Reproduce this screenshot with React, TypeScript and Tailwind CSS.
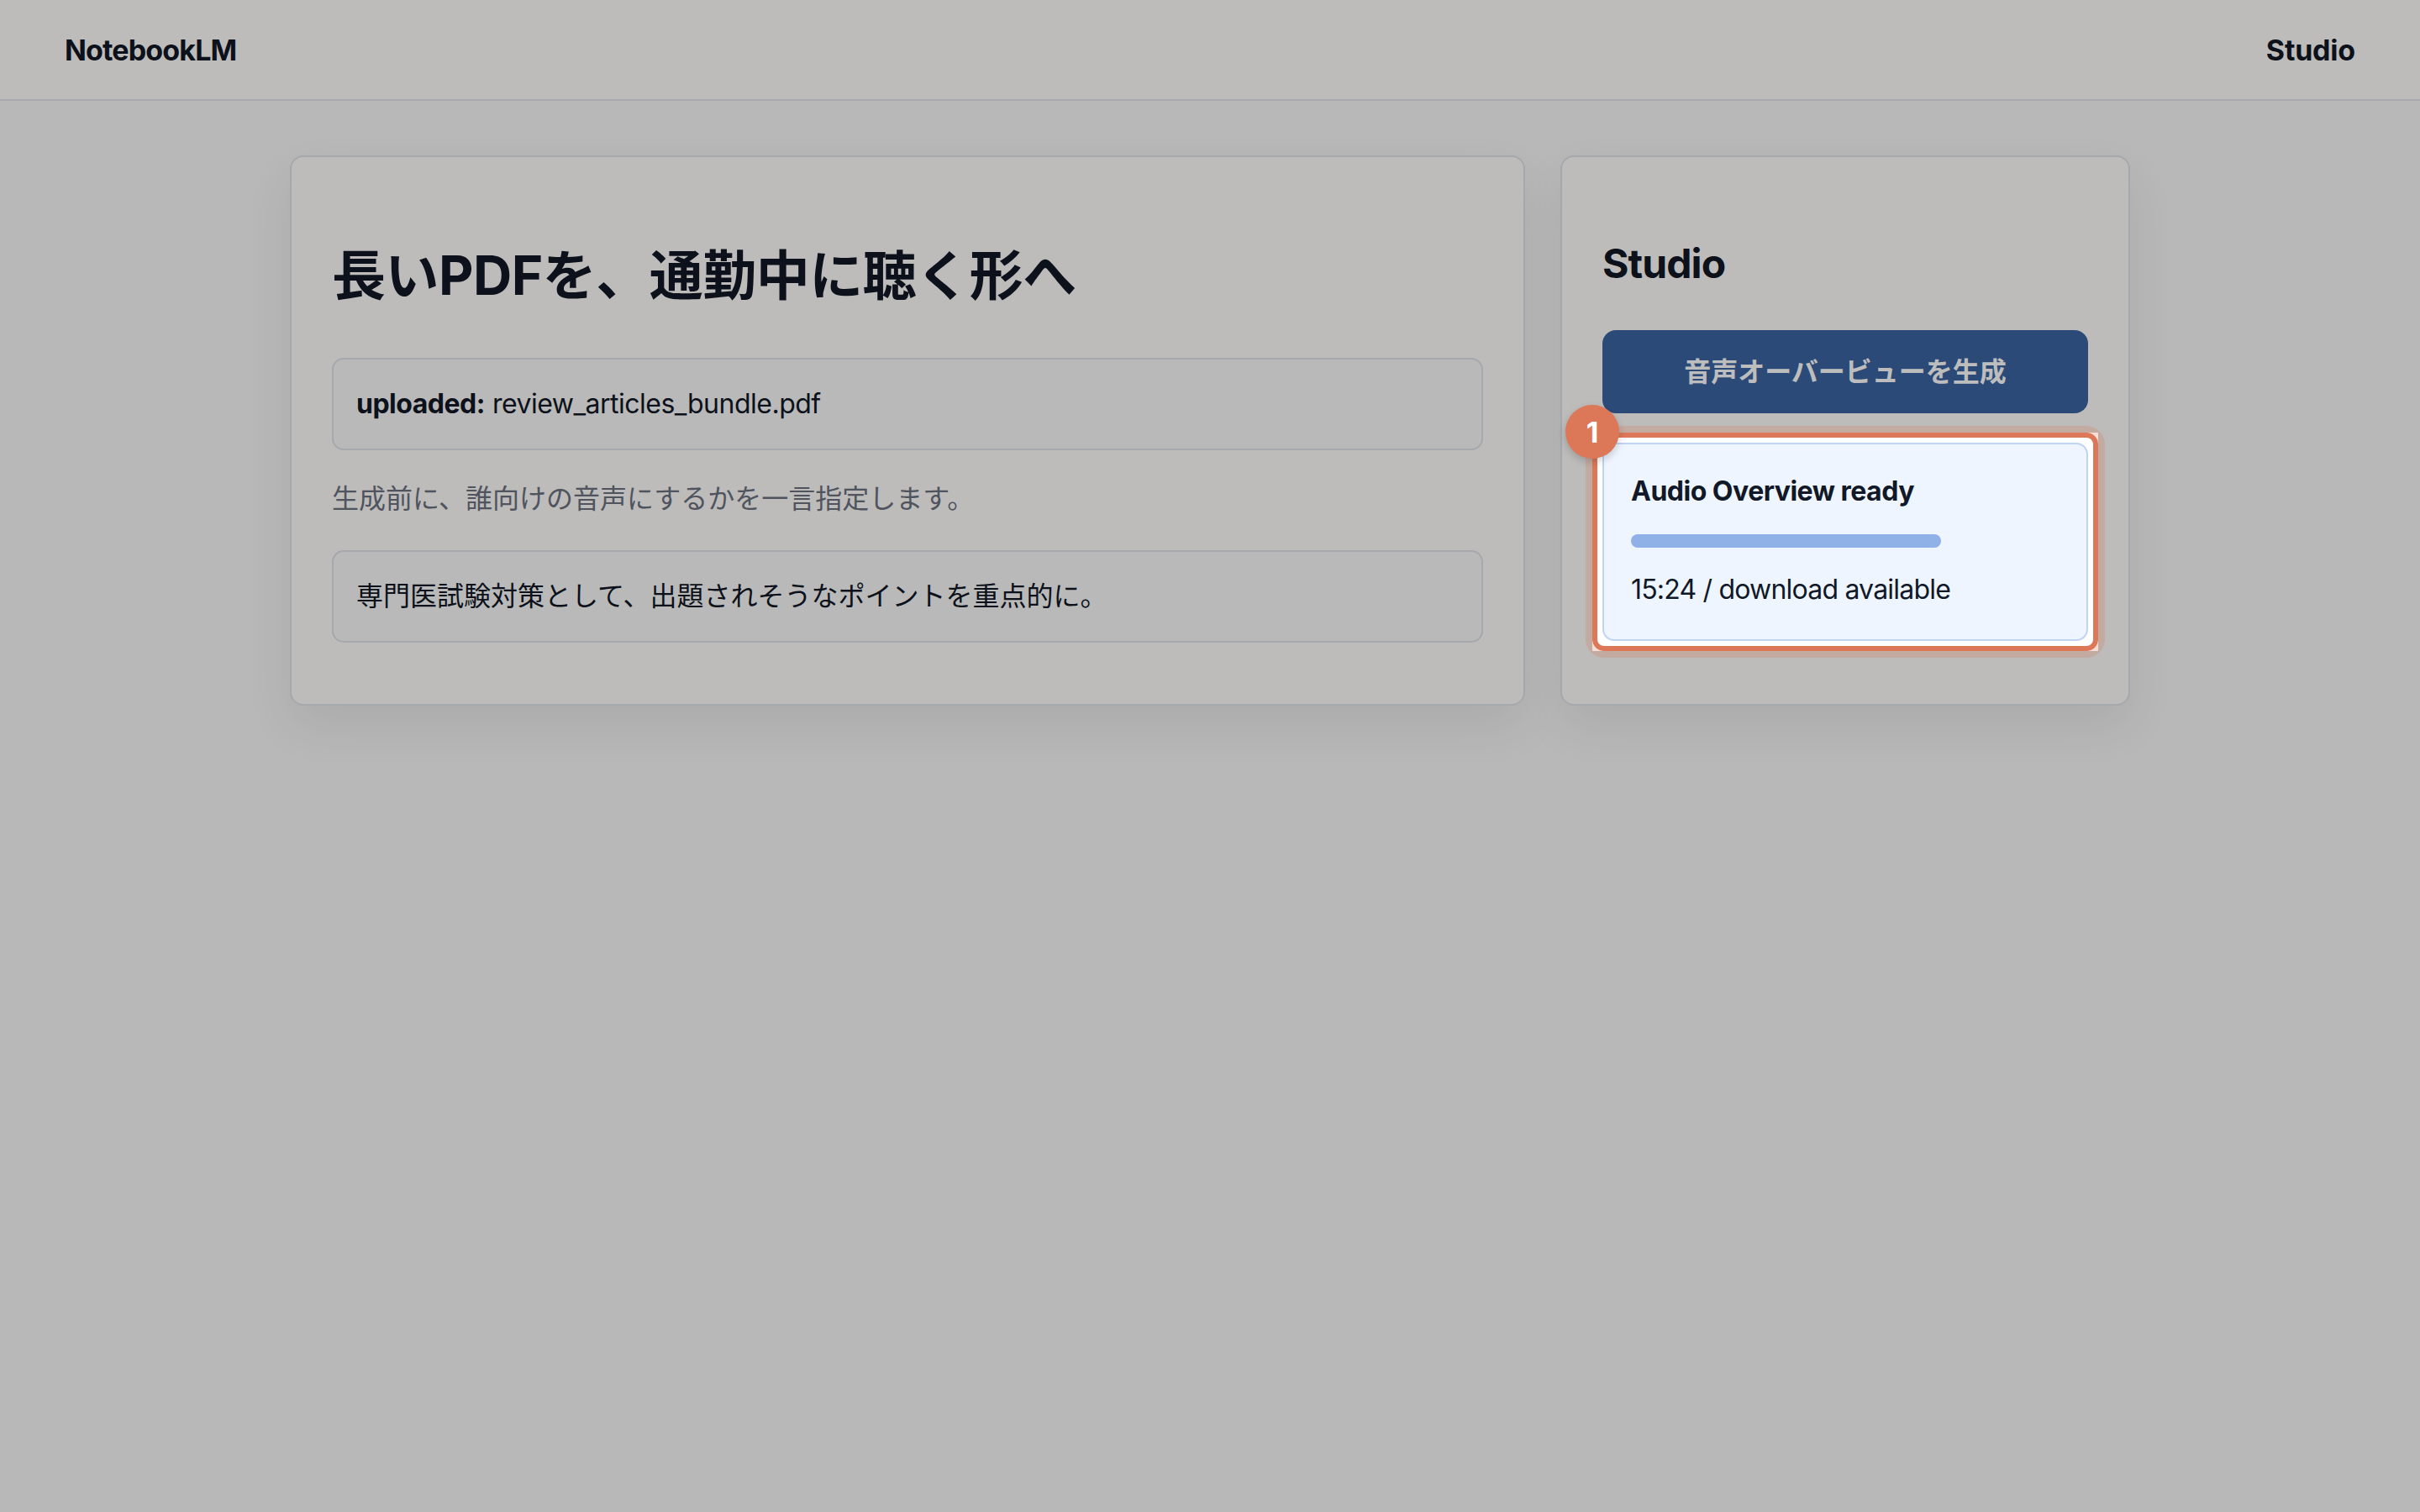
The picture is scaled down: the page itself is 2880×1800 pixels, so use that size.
import { FC } from "react";

const font = "font-['Inter','Noto_Sans_CJK_JP',sans-serif]";

const AudioReadyCard: FC = () => (
  <div className="relative z-20 mt-[35px]">
    {/* square cut-out in the dim layer + orange focus ring */}
    <div className="absolute -inset-[12px] bg-white" />
    <div className="absolute -inset-[12px] rounded-[14px] border-[6px] border-[#dc7858] shadow-[0_0_0_8px_rgba(220,120,88,0.25)]" />
    <div className="relative rounded-[14px] border-2 border-[#bfd3f5] bg-[#eef5ff] px-[32px] pt-[32px] pb-[35px]">
      <p className="text-[32px] leading-[48px] font-bold tracking-[-0.5px] text-[#111827]">Audio Overview ready</p>
      <div className="mt-[27px] h-[16px] w-[369px] rounded-full bg-[#8fb1e8]" />
      <p className="mt-[26px] text-[32px] leading-[48px] tracking-[-0.8px] text-[#111827]">15:24 / download available</p>
    </div>
    <div className="absolute -left-[44px] -top-[45px] z-30 flex h-[64px] w-[64px] items-center justify-center rounded-full bg-[#dc7858] text-[34px] font-bold text-white shadow-[0_4px_10px_rgba(0,0,0,0.18)]">
      1
    </div>
  </div>
);

const App: FC = () => {
  return (
    <div className={`relative min-h-screen h-[1800px] bg-[#f8f8f8] ${font} text-[#111827]`}>
      <header className="flex h-[120px] items-center justify-between border-b-2 border-[#e0e3e8] bg-[#fffefb] px-[77px]">
        <span className="text-[34px] font-bold tracking-[-0.85px]">NotebookLM</span>
        <span className="text-[34px] font-bold tracking-[-0.2px]">Studio</span>
      </header>

      <main className="pt-[65px]">
        <div className="mx-auto grid w-[2190px] grid-cols-[1470px_678px] gap-[42px]">
          <section className="rounded-[16px] border-2 border-[#dfe3ea] bg-[#fffefb] px-[48px] pt-[101px] pb-[73px] shadow-[0_24px_60px_rgba(0,0,0,0.07)]">
            <h1 className="text-[64px] leading-[80px] font-bold tracking-[-0.5px]">長いPDFを、通勤中に聴く形へ</h1>
            <div className="mt-[58px] flex h-[110px] items-center rounded-[14px] border-2 border-[#dfe3ea] bg-[#fafafa] px-[27px] text-[32px] tracking-[-0.5px]">
              <span className="font-bold">uploaded:</span>
              <span className="ml-[9px]">review_articles_bundle.pdf</span>
            </div>
            <p className="mt-[34px] text-[32px] leading-[48px] text-[#6b7280]">生成前に、誰向けの音声にするかを一言指定します。</p>
            <div className="mt-[37px] flex h-[110px] items-center rounded-[14px] border-2 border-[#dfe3ea] bg-[#fafafa] px-[27px] text-[32px]">
              専門医試験対策として、出題されそうなポイントを重点的に。
            </div>
          </section>

          <section className="rounded-[16px] border-2 border-[#dfe3ea] bg-[#fffefb] px-[48px] pt-[97px] shadow-[0_24px_60px_rgba(0,0,0,0.07)]">
            <h2 className="text-[48px] leading-[60px] font-bold tracking-[-0.9px]">Studio</h2>
            <button className="mt-[49px] flex h-[99px] w-full items-center justify-center rounded-[16px] bg-[#3a64a2] text-[32px] font-bold text-white">
              音声オーバービューを生成
            </button>
            <AudioReadyCard />
          </section>
        </div>
      </main>

      <div className="absolute inset-0 z-10 bg-black/[0.26]" />
    </div>
  );
};

export default App;
